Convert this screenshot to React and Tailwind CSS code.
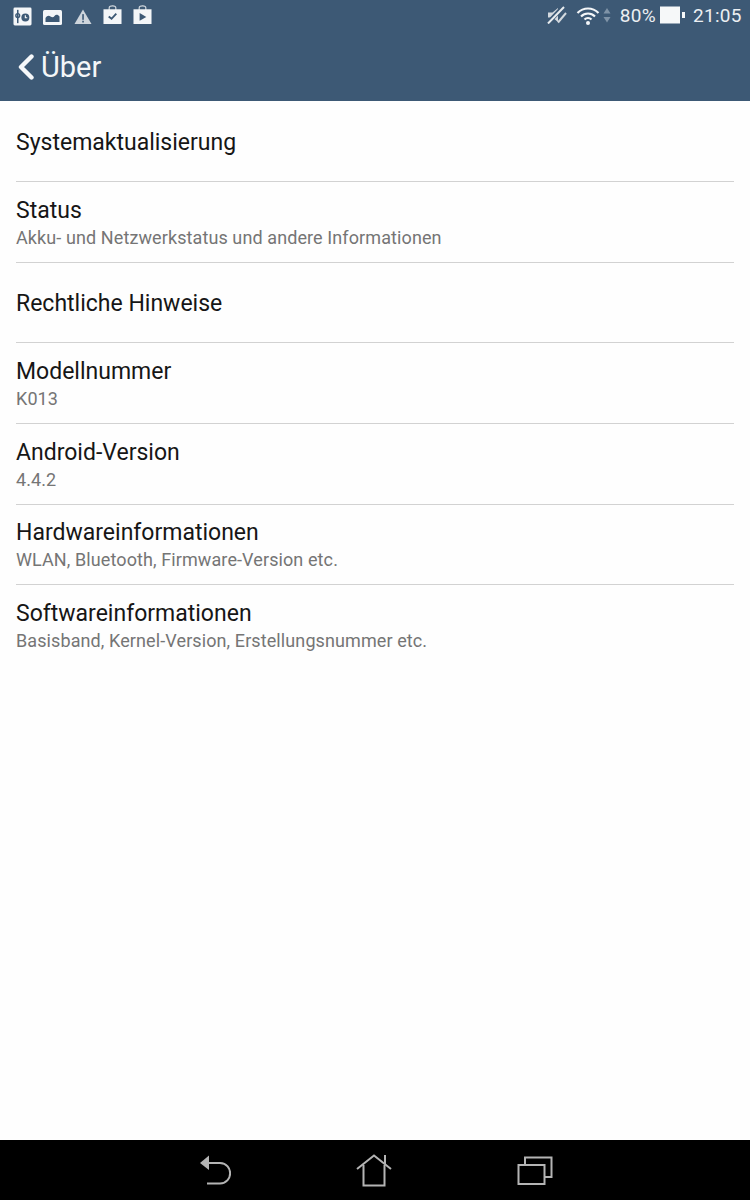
import React from "react";

const rows = [
  { t: "Systemaktualisierung", h: "h-[81px]" },
  { t: "Status", s: "Akku- und Netzwerkstatus und andere Informationen", h: "h-[81px]" },
  { t: "Rechtliche Hinweise", h: "h-[80px]" },
  { t: "Modellnummer", s: "K013", h: "h-[81px]" },
  { t: "Android-Version", s: "4.4.2", h: "h-[81px]" },
  { t: "Hardwareinformationen", s: "WLAN, Bluetooth, Firmware-Version etc.", h: "h-[80px]" },
  { t: "Softwareinformationen", s: "Basisband, Kernel-Version, Erstellungsnummer etc.", h: "h-[81px]", last: true },
];

function Row({ t, s, h, last }) {
  return (
    <div className={`${h} flex flex-col justify-center ${s ? "pt-[2px]" : "pt-[3px]"} ${last ? "" : "border-b border-[#d2d2d2]"}`}>
      <div className="text-[23px] leading-[28px] text-[#161616]">{t}</div>
      {s && <div className="text-[18px] leading-[24px] text-[#757575] mt-[1px] tracking-[0.1px]">{s}</div>}
    </div>
  );
}

function StatusLeft() {
  return (
    <div className="flex items-center pt-[2px] text-[#f4f6f8]">
      <svg width="19" height="19" viewBox="0 0 20 20">
        <rect x="0.5" y="0.5" width="19" height="19" rx="1.5" fill="#f4f6f8" />
        <path d="M5 3v14" stroke="#3d5975" strokeWidth="1.6" />
        <circle cx="5" cy="9" r="2" fill="none" stroke="#3d5975" strokeWidth="1.5" />
        <circle cx="13" cy="11" r="4.2" fill="#3d5975" />
        <path d="M13 8.8V11.3H15" stroke="#f4f6f8" strokeWidth="1.2" fill="none" />
      </svg>
      <svg width="19" height="15" viewBox="0 0 19 15" className="ml-[11px] mt-[2px]">
        <rect x="0" y="0" width="19" height="15" rx="1.5" fill="#f4f6f8" />
        <path d="M2.5 12V8C4 5.5 6 5 7.5 6.5C9 7.5 10.5 7.5 11.5 6C13 4 15 4.5 16.5 6.5V12Z" fill="#3d5975" />
      </svg>
      <svg width="18" height="17" viewBox="0 0 19 17" className="ml-[12px]">
        <path d="M9.5 1L18.5 16.5H0.5Z" fill="#ced5dc" />
        <rect x="8.7" y="6" width="1.7" height="6" fill="#3d5975" />
        <rect x="8.7" y="13" width="1.7" height="1.8" fill="#3d5975" />
      </svg>
      <svg width="19" height="21" viewBox="0 0 20 21" className="ml-[11px] mb-[4px]">
        <path d="M6.5 6V3.5C6.5 0.7 13.5 0.7 13.5 3.5V6" fill="none" stroke="#d5dbe1" strokeWidth="1.2" />
        <path d="M0.5 5H19.5V20.5H0.5Z" fill="#f4f6f8" />
        <path d="M6 12.5L9 15L14 9.5" fill="none" stroke="#3d5975" strokeWidth="2" />
      </svg>
      <svg width="19" height="21" viewBox="0 0 20 21" className="ml-[11px] mb-[4px]">
        <path d="M6.5 6V3.5C6.5 0.7 13.5 0.7 13.5 3.5V6" fill="none" stroke="#d5dbe1" strokeWidth="1.2" />
        <path d="M0.5 5H19.5V20.5H0.5Z" fill="#f4f6f8" />
        <path d="M7 9L14 13L7 17Z" fill="#3d5975" />
      </svg>
    </div>
  );
}

function StatusRight() {
  return (
    <div className="flex items-center text-[#eceff2] text-[19px] leading-none">
      <svg width="20" height="18" viewBox="0 0 20 18">
        <path d="M1 6.5H5.5L11 2V16L5.5 11.5H1Z" fill="#d3d9df" />
        <path d="M0 18L16 1" stroke="#3d5975" strokeWidth="4.5" />
        <path d="M1 17.5L17 1" stroke="#e8ecef" strokeWidth="2" />
        <path d="M11 16.5L19 7" stroke="#d3d9df" strokeWidth="2" />
      </svg>
      <svg width="24" height="19" viewBox="0 0 24 19" className="ml-[9px]" fill="none" stroke="#f4f6f8" strokeWidth="2.2">
        <path d="M1.5 7C7.5 1 16.5 1 22.5 7" />
        <path d="M5 10.5C9 6.5 15 6.5 19 10.5" />
        <path d="M8.5 13.5C10.5 11.5 13.5 11.5 15.5 13.5" />
        <circle cx="12" cy="17" r="2" fill="#f4f6f8" stroke="none" />
      </svg>
      <svg width="8" height="18" viewBox="0 0 8 18" className="ml-[3px]">
        <path d="M4 2L7.5 7.5H0.5Z" fill="#7f93a7" />
        <path d="M4 16.5L7.5 11H0.5Z" fill="#7f93a7" />
      </svg>
      <span className="ml-[9px] tracking-[0.3px]">80%</span>
      <svg width="25" height="18" viewBox="0 0 25 18" className="ml-[4px]">
        <rect x="0" y="0.5" width="20" height="17" fill="#f6f8f9" />
        <rect x="22" y="6" width="3" height="6" fill="#f6f8f9" />
      </svg>
      <span className="ml-[8px] w-[49px] tracking-[0.3px]">21:05</span>
    </div>
  );
}

export default function App() {
  return (
    <div className="w-[750px] h-[1200px] flex flex-col bg-[#fefefe] font-['Roboto',sans-serif]">
      <header className="h-[101px] shrink-0 bg-[#3d5975] flex flex-col">
        <div className="h-[30px] pl-[13px] pr-[8px] flex items-center justify-between">
          <StatusLeft />
          <StatusRight />
        </div>
        <div className="flex items-center pl-[18px] pt-[3px] h-[71px]">
          <svg width="16" height="26" viewBox="0 0 16 26" fill="none" stroke="#f6f8fa" strokeWidth="4.4" strokeLinecap="round" strokeLinejoin="round">
            <path d="M13.5 2.5L3 13L13.5 23.5" />
          </svg>
          <span className="ml-[7px] text-[29px] leading-none text-[#f4f6f8]">Über</span>
        </div>
      </header>
      <main className="flex-1 px-4">
        {rows.map((r) => (
          <Row key={r.t} {...r} />
        ))}
      </main>
      <footer className="h-[60px] shrink-0 bg-black flex items-center justify-center">
        <div className="flex items-center gap-[125px]">
          <svg width="33" height="30" viewBox="0 0 33 30" fill="none" stroke="#b4b4b4" strokeWidth="2">
            <path d="M9 8H22C35.5 8.5 35.5 28 22 28.5H9" />
            <path d="M2 8L11 0.5V15Z" fill="#b4b4b4" stroke="none" />
          </svg>
          <svg width="36" height="33" viewBox="0 0 36 33" fill="none" stroke="#b4b4b4" strokeWidth="2">
            <path d="M1 15L18 1.5L35 15" />
            <path d="M29 10V1" />
            <path d="M7.5 11V31.5H28.5V11" />
          </svg>
          <svg width="36" height="29" viewBox="0 0 36 29" fill="none" stroke="#b4b4b4" strokeWidth="2">
            <rect x="1.5" y="9" width="26" height="19" />
            <path d="M8 8V1.5H34.5V21H28" />
          </svg>
        </div>
      </footer>
    </div>
  );
}
